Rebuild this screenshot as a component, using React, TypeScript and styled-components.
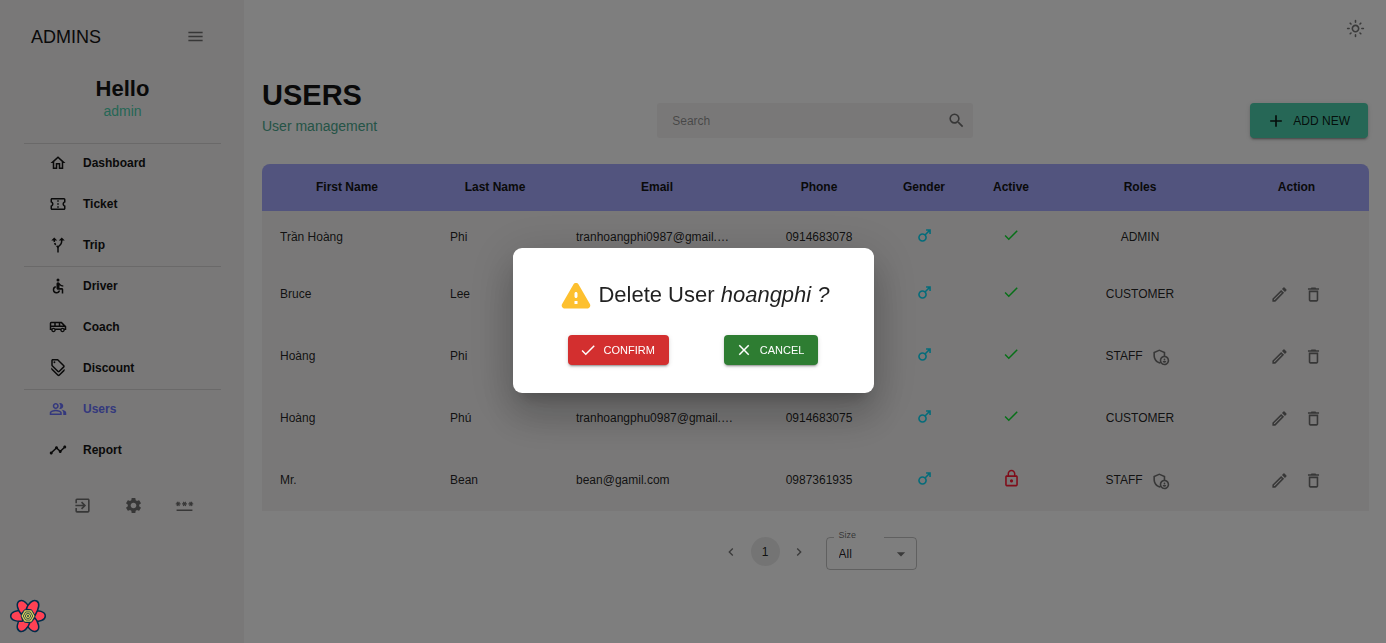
import React from 'react';
import styled, { createGlobalStyle } from 'styled-components';
import {
  MdAccessible,
  MdAdd,
  MdAltRoute,
  MdArrowDropDown,
  MdCheck,
  MdChevronLeft,
  MdChevronRight,
  MdClose,
  MdDeleteOutline,
  MdExitToApp,
  MdLockOutline,
  MdMale,
  MdMenu,
  MdOutlineAdminPanelSettings,
  MdOutlineAirportShuttle,
  MdOutlineConfirmationNumber,
  MdOutlineDiscount,
  MdOutlineHome,
  MdOutlineLightMode,
  MdOutlineModeEdit,
  MdOutlinePeopleAlt,
  MdPassword,
  MdSearch,
  MdSettings,
  MdTimeline,
} from 'react-icons/md';

const color = {
  page: '#fcfcfc',
  surface: '#f2f0f0',
  header: '#a4a9fc',
  ink: '#141414',
  text: 'rgba(0, 0, 0, 0.87)',
  icon: 'rgba(0, 0, 0, 0.54)',
  line: 'rgba(0, 0, 0, 0.12)',
  green: '#4cceac',
  accent: '#6870fa',
};

const GlobalStyle = createGlobalStyle`
  *, *::before, *::after { box-sizing: border-box; }
  body {
    margin: 0;
    background: ${color.page};
    color: ${color.text};
    font-family: "Liberation Sans", Arial, sans-serif;
    font-size: 12px;
    line-height: 18px;
  }
  button, input, select { font: inherit; color: inherit; }
  h1, h2, p { margin: 0; }
`;

const Layout = styled.div`
  display: flex;
  min-height: 100vh;
`;

const Sidebar = styled.aside`
  flex: 0 0 244px;
  background: ${color.surface};
  padding: 22px 23px 0 24px;
`;

const SidebarTop = styled.div`
  display: flex;
  align-items: center;
  justify-content: space-between;
  padding: 0 11px 0 7px;
`;

const Brand = styled.p`
  font-size: 18px;
  line-height: 28px;
  color: ${color.ink};
`;

const Greeting = styled.div`
  padding: 25px 0 22px;
  text-align: center;
`;

const Hello = styled.h2`
  font-size: 22px;
  line-height: 26px;
  color: ${color.ink};
`;

const UserName = styled.p`
  font-size: 14px;
  line-height: 19px;
  color: ${color.green};
`;

const NavGroup = styled.div`
  display: flex;
  flex-direction: column;
  gap: 3px;
  padding-bottom: 2px;
  border-top: 1px solid ${color.line};
`;

const NavLink = styled.a<{ $active?: boolean }>`
  display: flex;
  align-items: center;
  gap: 16px;
  height: 38px;
  padding-left: 25px;
  font-weight: 700;
  text-decoration: none;
  color: ${(p) => (p.$active ? color.accent : color.ink)};
`;

const SidebarTools = styled.div`
  display: flex;
  justify-content: center;
  gap: 22px;
  padding: 20px 0 0 22px;
`;

const IconButton = styled.button`
  display: inline-flex;
  align-items: center;
  justify-content: center;
  width: 29px;
  height: 29px;
  padding: 0;
  border: 0;
  border-radius: 50%;
  background: transparent;
  color: ${color.icon};
  font-size: 19px;
  cursor: pointer;
`;

const Main = styled.main`
  flex: 1;
  min-width: 0;
  padding: 14px 18px 0;
`;

const TopBar = styled.div`
  display: flex;
  justify-content: flex-end;
  margin-right: -2px;
`;

const PageHead = styled.header`
  display: flex;
  align-items: flex-end;
  justify-content: space-between;
  padding: 34px 0 26px;
`;

const Heading = styled.div`
  padding: 0 3px 2px 0;
`;

const Title = styled.h1`
  font-size: 29px;
  line-height: 36px;
  color: ${color.ink};
`;

const Subtitle = styled.p`
  padding-top: 3px;
  font-size: 14px;
  line-height: 20px;
  color: #4aa88e;
`;

const SearchBox = styled.form`
  display: flex;
  align-items: center;
  width: 316px;
  height: 35px;
  padding: 0 2px 0 15px;
  border-radius: 3px;
  background: ${color.surface};
`;

const SearchInput = styled.input`
  flex: 1;
  min-width: 0;
  padding: 0;
  border: 0;
  outline: 0;
  background: transparent;
  &::placeholder {
    color: rgba(0, 0, 0, 0.42);
    opacity: 1;
  }
`;

const Button = styled.button<{ $kind: 'add' | 'danger' | 'success' }>`
  display: inline-flex;
  align-items: center;
  gap: 7px;
  height: ${(p) => (p.$kind === 'add' ? 35 : 30)}px;
  padding: ${(p) => (p.$kind === 'add' ? '0 18px 0 16px' : '0 14px 0 11px')};
  border: 0;
  border-radius: 4px;
  background: ${(p) => ({ add: color.green, danger: '#d32f2f', success: '#2e7d32' })[p.$kind]};
  color: ${(p) => (p.$kind === 'add' ? color.text : '#fff')};
  font-size: ${(p) => (p.$kind === 'add' ? 12 : 11)}px;
  text-transform: uppercase;
  cursor: pointer;
  box-shadow: 0 3px 1px -2px rgba(0, 0, 0, 0.2), 0 2px 2px rgba(0, 0, 0, 0.14),
    0 1px 5px rgba(0, 0, 0, 0.12);
`;

const Table = styled.table`
  width: 100%;
  table-layout: fixed;
  border-spacing: 0;
  border-radius: 8px 8px 0 0;
  overflow: hidden;
  background: ${color.surface};
`;

const Th = styled.th`
  height: 47px;
  padding: 0 0 2px;
  background: ${color.header};
  color: ${color.ink};
`;

const Row = styled.tr<{ $compact?: boolean }>`
  height: ${(p) => (p.$compact ? 52 : 62)}px;
`;

const Td = styled.td<{ $center?: boolean }>`
  padding: ${(p) => (p.$center ? '0 18px' : '0 22px 0 18px')};
  text-align: ${(p) => (p.$center ? 'center' : 'left')};
  white-space: nowrap;
  overflow: hidden;
  text-overflow: ellipsis;
`;

const StatusIcon = styled.span<{ $color: string; $size: number }>`
  display: flex;
  justify-content: center;
  padding-bottom: 4px;
  color: ${(p) => p.$color};
  font-size: ${(p) => p.$size}px;
`;

const CellGroup = styled.div<{ $gap: number }>`
  display: flex;
  align-items: center;
  justify-content: center;
  gap: ${(p) => p.$gap}px;
`;

const Footer = styled.footer`
  display: flex;
  align-items: center;
  justify-content: center;
  gap: 12px;
  padding: 26px 0 0 3px;
`;

const Pager = styled.nav`
  display: flex;
  gap: 5px;
  padding-bottom: 4px;
`;

const PageButton = styled(IconButton)<{ $current?: boolean }>`
  background: ${(p) => (p.$current ? 'rgba(0, 0, 0, 0.08)' : 'transparent')};
  color: ${(p) => (p.$current ? color.text : color.icon)};
  font-size: ${(p) => (p.$current ? 12 : 16)}px;
`;

const SizeField = styled.div`
  position: relative;
  width: 91px;
`;

const SizeLabel = styled.label`
  position: absolute;
  top: -8px;
  left: 8px;
  width: 50px;
  padding-left: 5px;
  background: ${color.page};
  color: rgba(0, 0, 0, 0.6);
  font-size: 9px;
  line-height: 12px;
`;

const SizeSelect = styled.select`
  display: block;
  width: 100%;
  height: 33px;
  padding: 0 12px;
  border: 1px solid rgba(0, 0, 0, 0.23);
  border-radius: 4px;
  background: transparent;
  appearance: none;
`;

const SizeArrow = styled(MdArrowDropDown)`
  position: absolute;
  top: 7px;
  right: 6px;
  color: ${color.icon};
  font-size: 20px;
  pointer-events: none;
`;

const Backdrop = styled.div`
  position: fixed;
  inset: 0;
  display: flex;
  align-items: center;
  justify-content: center;
  padding-bottom: 2px;
  background: rgba(0, 0, 0, 0.5);
`;

const Dialog = styled.div`
  width: 361px;
  padding: 29px 0 28px;
  border-radius: 9px;
  background: #fff;
  box-shadow: 0 11px 15px -7px rgba(0, 0, 0, 0.2), 0 24px 38px 3px rgba(0, 0, 0, 0.14),
    0 9px 46px 8px rgba(0, 0, 0, 0.12);
`;

const DialogTitle = styled.h2`
  display: flex;
  align-items: center;
  justify-content: center;
  gap: 4px;
  padding: 0 0 22px 2px;
  font-size: 22px;
  font-weight: 400;
  line-height: 36px;
`;

const DialogActions = styled.div`
  display: flex;
  justify-content: center;
  gap: 55px;
`;

const DevtoolsButton = styled.button`
  position: fixed;
  left: 8px;
  bottom: 8px;
  display: flex;
  padding: 0;
  border: 0;
  background: transparent;
  cursor: pointer;
`;

function WarningIcon() {
  return (
    <svg width="36" height="36" viewBox="0 0 24 24" fill="#fdc02f" aria-hidden="true">
      <path d="M4.47 21h15.06c1.54 0 2.5-1.67 1.73-3L13.73 4.99c-.77-1.33-2.69-1.33-3.46 0L2.74 18c-.77 1.33.19 3 1.73 3zM12 14c-.55 0-1-.45-1-1v-2c0-.55.45-1 1-1s1 .45 1 1v2c0 .55-.45 1-1 1zm1 4h-2v-2h2v2z" />
    </svg>
  );
}

const hexagon = (r: number) =>
  [0, 60, 120, 180, 240, 300]
    .map((a) => {
      const t = (a * Math.PI) / 180;
      return `${(r * Math.cos(t)).toFixed(2)},${(r * Math.sin(t)).toFixed(2)}`;
    })
    .join(' ');

function FlowerLogo() {
  return (
    <svg width="40" height="38" viewBox="-20 -19 40 38" aria-hidden="true">
      {[0, 60, 120, 180, 240, 300].map((a) => (
        <path
          key={a}
          transform={`rotate(${a})`}
          d="M5 -5C10 -6 17.3 -4.6 17.3 0C17.3 4.6 11 5.8 3.6 5.8L6.6 0Z"
          fill="#ff4154"
          stroke="#002c4b"
          strokeWidth="1.5"
          strokeLinejoin="round"
        />
      ))}
      <polygon points={hexagon(6.9)} fill="#e6d558" stroke="#002c4b" strokeWidth="0.6" />
      <polygon points={hexagon(4.7)} fill="none" stroke="#002c4b" strokeWidth="0.8" />
      <polygon points={hexagon(2.7)} fill="none" stroke="#002c4b" strokeWidth="0.8" />
      <circle r="0.9" fill="#002c4b" />
    </svg>
  );
}

const navGroups = [
  [
    { label: 'Dashboard', Icon: MdOutlineHome },
    { label: 'Ticket', Icon: MdOutlineConfirmationNumber },
    { label: 'Trip', Icon: MdAltRoute },
  ],
  [
    { label: 'Driver', Icon: MdAccessible },
    { label: 'Coach', Icon: MdOutlineAirportShuttle },
    { label: 'Discount', Icon: MdOutlineDiscount },
  ],
  [
    { label: 'Users', Icon: MdOutlinePeopleAlt, active: true },
    { label: 'Report', Icon: MdTimeline },
  ],
];

const columns = [
  { label: 'First Name', width: 170 },
  { label: 'Last Name', width: 126 },
  { label: 'Email', width: 198 },
  { label: 'Phone', width: 126 },
  { label: 'Gender', width: 84 },
  { label: 'Active', width: 90 },
  { label: 'Roles', width: 168 },
  { label: 'Action', width: 145 },
];

const users = [
  { id: 1, first: 'Trần Hoàng', last: 'Phi', email: 'tranhoangphi0987@gmail.com', phone: '0914683078', active: true, role: 'ADMIN' },
  { id: 2, first: 'Bruce', last: 'Lee', email: '', phone: '', active: true, role: 'CUSTOMER' },
  { id: 3, first: 'Hoàng', last: 'Phi', email: '', phone: '', active: true, role: 'STAFF' },
  { id: 4, first: 'Hoàng', last: 'Phú', email: 'tranhoangphu0987@gmail.com', phone: '0914683075', active: true, role: 'CUSTOMER' },
  { id: 5, first: 'Mr.', last: 'Bean', email: 'bean@gamil.com', phone: '0987361935', active: false, role: 'STAFF' },
];

export default function App() {
  return (
    <>
      <GlobalStyle />
      <Layout>
        <Sidebar>
          <SidebarTop>
            <Brand>ADMINS</Brand>
            <IconButton aria-label="Collapse menu">
              <MdMenu />
            </IconButton>
          </SidebarTop>
          <Greeting>
            <Hello>Hello</Hello>
            <UserName>admin</UserName>
          </Greeting>
          <nav>
            {navGroups.map((group) => (
              <NavGroup key={group[0].label}>
                {group.map(({ label, Icon, ...rest }) => (
                  <NavLink key={label} href="#" $active={'active' in rest}>
                    <Icon size={18} />
                    {label}
                  </NavLink>
                ))}
              </NavGroup>
            ))}
          </nav>
          <SidebarTools>
            <IconButton aria-label="Log out">
              <MdExitToApp />
            </IconButton>
            <IconButton aria-label="Settings">
              <MdSettings />
            </IconButton>
            <IconButton aria-label="Change password">
              <MdPassword />
            </IconButton>
          </SidebarTools>
        </Sidebar>

        <Main>
          <TopBar>
            <IconButton aria-label="Toggle theme">
              <MdOutlineLightMode />
            </IconButton>
          </TopBar>

          <PageHead>
            <Heading>
              <Title>USERS</Title>
              <Subtitle>User management</Subtitle>
            </Heading>
            <SearchBox>
              <SearchInput type="text" placeholder="Search" aria-label="Search" />
              <IconButton type="button" aria-label="Run search">
                <MdSearch />
              </IconButton>
            </SearchBox>
            <Button $kind="add">
              <MdAdd size={20} />
              Add new
            </Button>
          </PageHead>

          <Table>
            <colgroup>
              {columns.map((c) => (
                <col key={c.label} width={c.width} />
              ))}
            </colgroup>
            <thead>
              <tr>
                {columns.map((c) => (
                  <Th key={c.label} scope="col">
                    {c.label}
                  </Th>
                ))}
              </tr>
            </thead>
            <tbody>
              {users.map((u) => (
                <Row key={u.id} $compact={u.role === 'ADMIN'}>
                  <Td>{u.first}</Td>
                  <Td>{u.last}</Td>
                  <Td>{u.email}</Td>
                  <Td $center>{u.phone}</Td>
                  <Td $center>
                    <StatusIcon $color="#08d8f5" $size={19}>
                      <MdMale title="Male" />
                    </StatusIcon>
                  </Td>
                  <Td $center>
                    <StatusIcon $color={u.active ? '#0fe030' : '#ff1a35'} $size={u.active ? 18 : 19}>
                      {u.active ? <MdCheck title="Active" /> : <MdLockOutline title="Locked" />}
                    </StatusIcon>
                  </Td>
                  <Td $center>
                    <CellGroup $gap={3}>
                      {u.role}
                      {u.role === 'STAFF' && (
                        <IconButton aria-label="Permissions">
                          <MdOutlineAdminPanelSettings />
                        </IconButton>
                      )}
                    </CellGroup>
                  </Td>
                  <Td $center>
                    {u.role !== 'ADMIN' && (
                      <CellGroup $gap={5}>
                        <IconButton aria-label="Edit">
                          <MdOutlineModeEdit />
                        </IconButton>
                        <IconButton aria-label="Delete">
                          <MdDeleteOutline />
                        </IconButton>
                      </CellGroup>
                    )}
                  </Td>
                </Row>
              ))}
            </tbody>
          </Table>

          <Footer>
            <Pager aria-label="Pages">
              <PageButton aria-label="Previous page">
                <MdChevronLeft />
              </PageButton>
              <PageButton $current>1</PageButton>
              <PageButton aria-label="Next page">
                <MdChevronRight />
              </PageButton>
            </Pager>
            <SizeField>
              <SizeSelect id="page-size" defaultValue="all">
                <option value="all">All</option>
              </SizeSelect>
              <SizeLabel htmlFor="page-size">Size</SizeLabel>
              <SizeArrow />
            </SizeField>
          </Footer>
        </Main>
      </Layout>

      <Backdrop>
        <Dialog role="dialog" aria-modal="true" aria-labelledby="delete-title">
          <DialogTitle id="delete-title">
            <WarningIcon />
            <span>
              Delete User <em>hoangphi ?</em>
            </span>
          </DialogTitle>
          <DialogActions>
            <Button $kind="danger">
              <MdCheck size={18} />
              Confirm
            </Button>
            <Button $kind="success">
              <MdClose size={18} />
              Cancel
            </Button>
          </DialogActions>
        </Dialog>
      </Backdrop>

      <DevtoolsButton aria-label="Open query devtools">
        <FlowerLogo />
      </DevtoolsButton>
    </>
  );
}
